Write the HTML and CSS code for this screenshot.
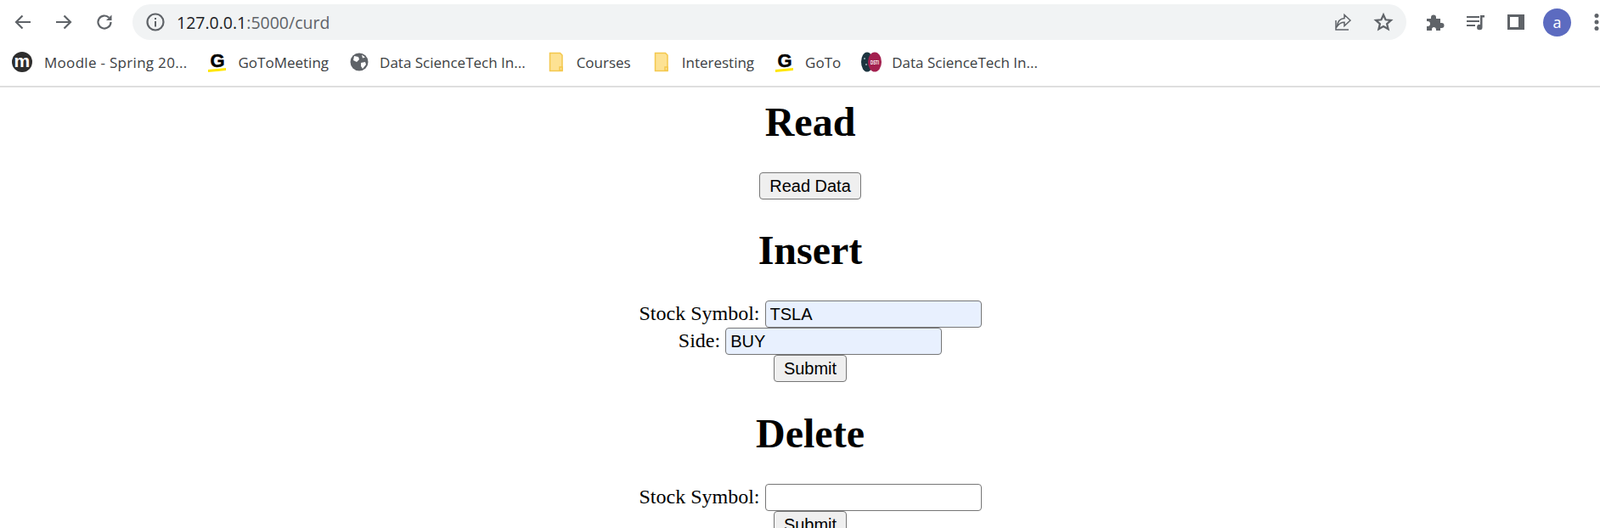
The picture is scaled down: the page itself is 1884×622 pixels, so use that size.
FILE: index.html
```html
<!DOCTYPE html>
<html lang="en">
<head>
    <meta charset="UTF-8">
    <title>CURD</title>
    <link rel="stylesheet" href="styles.css">
</head>
<body>
<!--browser toolbar-->
<div class="toolbar">
    <div class="nav-icons">
        <svg class="icon" viewBox="0 0 24 24"><path d="M21 12H4M11.500 4.500L4 12l7.500 7.500" class="line"/></svg>
        <svg class="icon" viewBox="0 0 24 24"><path d="M3 12h17M12.500 4.500L20 12l-7.500 7.500" class="line"/></svg>
        <svg class="icon" viewBox="0 0 24 24"><path d="M19.500 12a7.500 7.500 0 1 1-2.200-5.300" class="line"/><path d="M20.500 3.500v6.500h-6.500z" class="fill"/></svg>
    </div>
    <div class="omnibox">
        <svg class="icon info" viewBox="0 0 24 24"><circle cx="12" cy="12" r="9.500" class="line"/><path d="M11 11h2v6.500h-2zM11 7h2v2h-2z" class="fill"/></svg>
        <span class="url">127.0.0.1<span class="url-rest">:5000/curd</span></span>
        <div class="omni-right">
            <svg class="icon" viewBox="0 0 24 24"><path d="M4 10v11h15M21 10l-7-6.500v4c-5 .5-8 4-8.500 9.500 2.500-3.500 5-4.800 8.500-4.800v4.300z" class="thin"/></svg>
            <svg class="icon" viewBox="0 0 24 24"><path d="M12 3.500l2.600 5.800 6.300.6-4.800 4.200 1.500 6.200-5.600-3.300-5.600 3.300 1.500-6.200-4.800-4.200 6.300-.6z" class="line"/></svg>
        </div>
    </div>
    <div class="ext-icons">
        <svg class="icon" viewBox="0 0 24 24"><path d="M3 8h5V6.500a3 3 0 0 1 6 0V8h5v5h1.500a3 3 0 0 1 0 6H19v3h-5v-1.500a2.500 2.500 0 0 0-5 0V22H3v-5h1a3 3 0 0 0 0-6H3z" class="fill"/></svg>
        <svg class="icon" viewBox="0 0 24 24"><path d="M2 5h15v2H2zM2 10h15v2H2zM2 15h10v2H2zM18 4h5v2.500h-2.500V18a3.200 3.200 0 1 1-2.500-3z" class="fill"/></svg>
        <svg class="icon" viewBox="0 0 24 24"><path d="M2 3h20v18H2zM5 6v12h10V6z" class="fill" fill-rule="evenodd"/></svg>
        <div class="avatar">a</div>
        <svg class="icon dots" viewBox="0 0 24 24"><circle cx="12" cy="4.500" r="2.500" class="fill"/><circle cx="12" cy="12" r="2.500" class="fill"/><circle cx="12" cy="19.500" r="2.500" class="fill"/></svg>
    </div>
</div>
<!--bookmarks-->
<div class="bookmarks">
    <div class="bookmark moodle">
        <svg class="icon" viewBox="0 0 24 24"><circle cx="12" cy="12" r="12" fill="#2e2e2e"/><text x="12" y="18" class="moodle-m">m</text></svg>
        <span>Moodle - Spring 20...</span>
    </div>
    <div class="bookmark">
        <svg class="icon" viewBox="0 0 24 24"><text x="12" y="18" class="goto-g">G</text><path d="M1 21l21-2v3l-21 2z" fill="#ffe600"/></svg>
        <span>GoToMeeting</span>
    </div>
    <div class="bookmark">
        <svg class="icon" viewBox="0 0 24 24"><circle cx="12" cy="12" r="10.500" fill="#5f6368"/><path d="M6 5l5 1 1 3-3 3-4-2zM14 13l5-1 1 3-4 5-2-3zM15 3.500l4 3-3 1z" fill="#fff"/></svg>
        <span>Data ScienceTech In...</span>
    </div>
    <div class="bookmark">
        <svg class="icon" viewBox="0 0 24 24"><path d="M4.500 1.500h12l2.500 2.500v18.500H4.500z" class="folder"/><path d="M16 22v-4h3v4z" class="folder"/></svg>
        <span>Courses</span>
    </div>
    <div class="bookmark">
        <svg class="icon" viewBox="0 0 24 24"><path d="M4.500 1.500h12l2.500 2.500v18.500H4.500z" class="folder"/><path d="M16 22v-4h3v4z" class="folder"/></svg>
        <span>Interesting</span>
    </div>
    <div class="bookmark">
        <svg class="icon" viewBox="0 0 24 24"><text x="12" y="18" class="goto-g">G</text><path d="M1 21l21-2v3l-21 2z" fill="#ffe600"/></svg>
        <span>GoTo</span>
    </div>
    <div class="bookmark">
        <svg class="icon" viewBox="0 0 24 24"><ellipse cx="7" cy="12" rx="7" ry="11.500" fill="#1d3540"/><circle cx="4" cy="8" r="1" fill="#9fb3bb"/><circle cx="6" cy="15" r="1" fill="#9fb3bb"/><ellipse cx="16" cy="12" rx="8" ry="11.500" fill="#a3204f"/><text x="16" y="15" class="dsti" textLength="10" lengthAdjust="spacingAndGlyphs">DSTI</text></svg>
        <span>Data ScienceTech In...</span>
    </div>
</div>
<!--the page itself-->
<div class="page">
    <h1>Read</h1>
    <button>Read Data</button>

    <h1>Insert</h1>
    <form>
        Stock Symbol: <input type="text" class="filled" value="TSLA"><br>
        Side: <input type="text" class="filled" value="BUY"><br>
        <button type="submit">Submit</button>
    </form>

    <h1>Delete</h1>
    <form>
        Stock Symbol: <input type="text"><br>
        <button type="submit">Submit</button>
    </form>
</div>
</body>
</html>
```

FILE: styles.css
```css
html, body {
    height: 622px;
    margin: 0;
    overflow: hidden;
    background-color: white;
}
.icon {
    display: block;
    width: 24px;
    height: 24px;
    flex-shrink: 0;
    overflow: visible;
}
.line {
    fill: none;
    stroke: #5f6368;
    stroke-width: 2.2;
}
.thin {
    fill: none;
    stroke: #5f6368;
    stroke-width: 1.5;
}
.fill {
    fill: #5f6368;
}
.toolbar {
    display: flex;
    align-items: center;
    height: 52px;
    padding-left: 15px;
}
.nav-icons {
    display: flex;
    gap: 24px;
    width: 141px;
    flex-shrink: 0;
}
.omnibox {
    display: flex;
    align-items: center;
    width: 1500px;
    height: 42px;
    border-radius: 21px;
    background-color: #f1f3f4;
    padding-left: 15px;
    box-sizing: border-box;
    flex-shrink: 0;
}
.url {
    margin-left: 13px;
    font-family: "Open Sans", sans-serif;
    font-size: 19.5px;
    color: #202124;
}
.url-rest {
    color: #5f6368;
}
.omni-right {
    display: flex;
    gap: 24px;
    margin-left: auto;
    margin-right: 15px;
}
.ext-icons {
    display: flex;
    align-items: center;
    gap: 24px;
    margin-left: 21px;
    flex-shrink: 0;
}
.avatar {
    width: 33px;
    height: 33px;
    margin-left: -4px;
    border-radius: 50%;
    background-color: #5c6bc0;
    color: white;
    text-align: center;
    line-height: 32px;
    font-family: "Open Sans", sans-serif;
    font-size: 18px;
    flex-shrink: 0;
}
.dots {
    margin-left: -6px;
}
.bookmarks {
    display: flex;
    align-items: center;
    gap: 24px;
    height: 42px;
    padding-left: 14px;
    padding-bottom: 7px;
    border-bottom: 2px solid #dedede;
    font-family: "Open Sans", sans-serif;
    font-size: 17px;
    color: #3c4043;
}
.bookmark {
    display: flex;
    align-items: center;
    gap: 12px;
}
.moodle {
    gap: 14px;
    letter-spacing: 0.3px;
}
.moodle-m {
    fill: white;
    font-family: "Liberation Sans", sans-serif;
    font-weight: bold;
    font-size: 21px;
    text-anchor: middle;
}
.goto-g {
    fill: black;
    stroke: black;
    stroke-width: 0.5;
    font-family: "Liberation Sans", sans-serif;
    font-weight: bold;
    font-size: 22px;
    text-anchor: middle;
}
.dsti {
    fill: white;
    font-family: "Liberation Sans", sans-serif;
    font-weight: bold;
    font-size: 8px;
    text-anchor: middle;
}
.folder {
    fill: #fde293;
    stroke: #f4c84e;
    stroke-width: 1.5;
}
.page {
    padding-left: 24px;
    text-align: center;
    font-family: "Liberation Serif", serif;
    font-size: 24px;
    color: black;
}
h1 {
    font-size: 48px;
    margin: 32px 0;
}
h1:first-child {
    margin-top: 13px;
}
form {
    padding-bottom: 1px;
}
input {
    width: 255px;
    height: 32px;
    box-sizing: border-box;
    border: 1.5px solid #767676;
    border-radius: 4px;
    padding: 1px 5px;
    font-family: "Liberation Sans", sans-serif;
    font-size: 20px;
    background-color: white;
}
.filled {
    background-color: #e8f0fe;
}
button {
    height: 32px;
    padding: 1px 11px;
    box-sizing: border-box;
    border: 1.5px solid #767676;
    border-radius: 4px;
    background-color: #efefef;
    font-family: "Liberation Sans", sans-serif;
    font-size: 20px;
    color: black;
}
```
